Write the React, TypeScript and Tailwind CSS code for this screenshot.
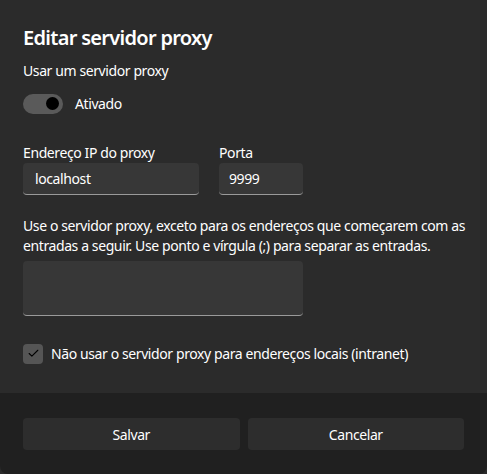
import { Check } from 'lucide-react';

function TextBox({ value, className }: { value?: string; className: string }) {
  return (
    <div className={`rounded-[4px] bg-[#373737] border-b border-[#9a9a9a] flex items-center px-3 text-[14px] text-white ${className}`}>
      {value}
    </div>
  );
}

export default function App() {
  return (
    <div className="w-[487px] h-[474px] bg-[#2b2b2b] flex flex-col text-white overflow-hidden tracking-[-0.4px]"
      style={{ fontFamily: '"Noto Sans", "Liberation Sans", sans-serif' }}>
      <div className="flex-1 px-[23px] pt-[24px]">
        <h1 className="text-[20px] font-semibold leading-[28px] tracking-[-0.7px]">Editar servidor proxy</h1>

        <p className="mt-[9px] text-[14px] leading-[20px]">Usar um servidor proxy</p>

        {/* Toggle */}
        <div className="mt-[12px] flex items-center gap-[12px]">
          <div className="w-[40px] h-[20px] rounded-full bg-[#5a5a5a] flex items-center justify-end pr-[4px]">
            <div className="w-[13px] h-[13px] rounded-full bg-black" />
          </div>
          <span className="text-[14px]">Ativado</span>
        </div>

        {/* Address + port */}
        <div className="mt-[29px] flex gap-[20px]">
          <div className="flex flex-col">
            <label className="text-[14px] leading-[20px]">Endereço IP do proxy</label>
            <TextBox value="localhost" className="w-[176px] h-[32px]" />
          </div>
          <div className="flex flex-col">
            <label className="text-[14px] leading-[20px]">Porta</label>
            <TextBox value="9999" className="w-[84px] h-[32px] px-[10px]" />
          </div>
        </div>

        <p className="mt-[21px] mr-[-20px] text-[14px] leading-[20px]">
          Use o servidor proxy, exceto para os endereços que começarem com as<br />
          entradas a seguir. Use ponto e vírgula (;) para separar as entradas.
        </p>

        <TextBox className="mt-[5px] w-[280px] h-[55px]" />

        {/* Checkbox */}
        <div className="mt-[27px] flex items-center gap-[8px]">
          <div className="w-[20px] h-[20px] rounded-[4px] bg-[#555555] flex items-center justify-center">
            <Check size={13} strokeWidth={2} color="#000" />
          </div>
          <span className="text-[14px]">Não usar o servidor proxy para endereços locais (intranet)</span>
        </div>
      </div>

      {/* Footer */}
      <div className="h-[81px] bg-[#202020] px-[23px] pt-[25px] flex gap-[8px] rounded-b-[8px]">
        <button className="flex-1 h-[32px] rounded-[4px] bg-[#2d2d2d] text-[14px] text-white">Salvar</button>
        <button className="flex-1 h-[32px] rounded-[4px] bg-[#2d2d2d] text-[14px] text-white">Cancelar</button>
      </div>
    </div>
  );
}
